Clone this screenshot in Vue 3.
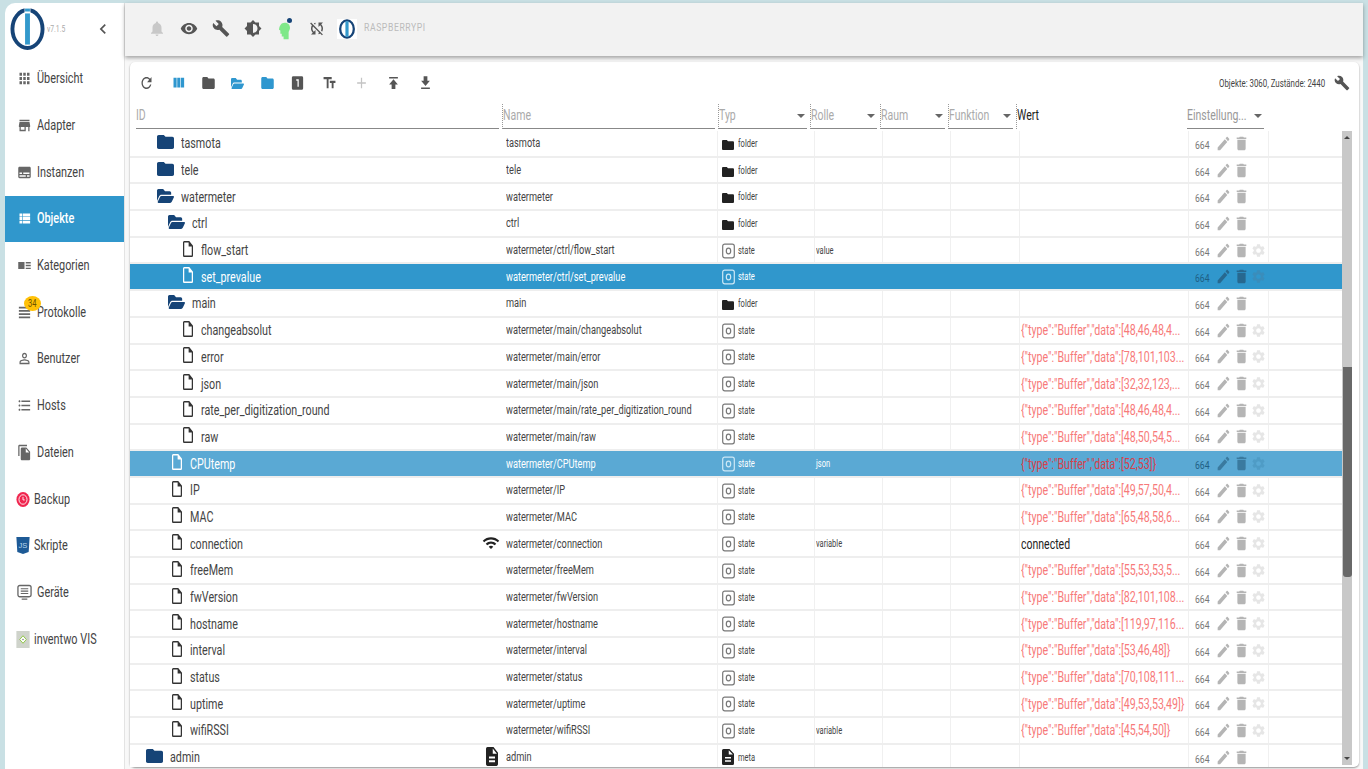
<script setup>
const icons = {
  refresh: 'M17.65 6.35C16.2 4.9 14.21 4 12 4c-4.42 0-7.99 3.58-7.99 8s3.57 8 7.99 8c3.73 0 6.84-2.55 7.73-6h-2.08c-.82 2.33-3.04 4-5.65 4-3.31 0-6-2.69-6-6s2.69-6 6-6c1.66 0 3.14.69 4.22 1.78L13 11h7V4l-2.35 2.35z',
  columns: 'M10 18h5V5h-5v13zm-6 0h5V5H4v13zM16 5v13h5V5h-5z',
  folder: 'M10 4H4c-1.1 0-1.99.9-1.99 2L2 18c0 1.1.9 2 2 2h16c1.1 0 2-.9 2-2V8c0-1.1-.9-2-2-2h-8l-2-2z',
  file: 'M14 2H6c-1.1 0-1.99.9-1.99 2L4 20c0 1.1.89 2 1.99 2H18c1.1 0 2-.9 2-2V8l-6-6zM6 20V4h7v5h5v11H6z',
  doc: 'M14 2H6c-1.1 0-1.99.9-1.99 2L4 20c0 1.1.89 2 1.99 2H18c1.1 0 2-.9 2-2V8l-6-6zm2 16H8v-2h8v2zm0-4H8v-2h8v2zm-3-5V3.5L18.5 9H13z',
  wrench: 'M22.7 19l-9.1-9.1c.9-2.3.4-5-1.5-6.9-2-2-5-2.4-7.4-1.3L9 6 6 9 1.6 4.7C.4 7.1.9 10.1 2.9 12.1c1.9 1.9 4.6 2.4 6.9 1.5l9.1 9.1c.4.4 1 .4 1.4 0l2.3-2.3c.5-.4.5-1.1.1-1.4z',
  bell: 'M12 22c1.1 0 2-.9 2-2h-4c0 1.1.89 2 2 2zm6-6v-5c0-3.07-1.64-5.64-4.5-6.32V4c0-.83-.67-1.5-1.5-1.5s-1.5.67-1.5 1.5v.68C7.63 5.36 6 7.92 6 11v5l-2 2v1h16v-1l-2-2z',
  eye: 'M12 4.5C7 4.5 2.73 7.61 1 12c1.73 4.39 6 7.5 11 7.5s9.27-3.11 11-7.5c-1.73-4.39-6-7.5-11-7.5zM12 17c-2.76 0-5-2.24-5-5s2.24-5 5-5 5 2.24 5 5-2.24 5-5 5zm0-8c-1.66 0-3 1.34-3 3s1.34 3 3 3 3-1.34 3-3-1.34-3-3-3z',
  bright: 'M20 15.31L23.31 12 20 8.69V4h-4.69L12 .69 8.69 4H4v4.69L.69 12 4 15.31V20h4.69L12 23.31 15.31 20H20v-4.69zM12 18V6c3.31 0 6 2.69 6 6s-2.69 6-6 6z',
  sync: 'M10 6.35V4.26c-.8.21-1.55.54-2.23.96l1.46 1.46c.25-.12.5-.24.77-.33zm-7.14-.94l2.36 2.36C4.45 8.99 4 10.44 4 12c0 2.21.91 4.2 2.36 5.64L4 20h6v-6l-2.24 2.24C6.68 15.15 6 13.66 6 12c0-1 .25-1.94.68-2.77l8.08 8.08c-.25.13-.5.25-.77.34v2.09c.8-.21 1.55-.54 2.23-.96l2.36 2.36 1.27-1.27L4.14 4.14 2.86 5.41zM20 4h-6v6l2.24-2.24C17.32 8.85 18 10.34 18 12c0 1-.25 1.94-.68 2.77l1.46 1.46C19.55 15.01 20 13.56 20 12c0-2.21-.91-4.2-2.36-5.64L20 4z',
  chevron: 'M15.41 7.41L14 6l-6 6 6 6 1.41-1.41L10.83 12z',
  apps: 'M4 8h4V4H4v4zm6 12h4v-4h-4v4zm-6 0h4v-4H4v4zm0-6h4v-4H4v4zm6 0h4v-4h-4v4zm6-10v4h4V4h-4zm-6 4h4V4h-4v4zm6 6h4v-4h-4v4zm0 6h4v-4h-4v4z',
  store: 'M20 4H4v2h16V4zm1 10v-2l-1-5H4l-1 5v2h1v6h10v-6h4v6h2v-6h1zm-9 4H6v-4h6v4z',
  inst: 'M20 4H4c-1.1 0-2 .9-2 2v12c0 1.1.9 2 2 2h16c1.1 0 2-.9 2-2V6c0-1.1-.9-2-2-2zM4 12h4v2H4v-2zm10 6H4v-2h10v2zm6 0h-4v-2h4v2zm0-4H10v-2h10v2z',
  list: 'M4 14h4v-4H4v4zm0 5h4v-4H4v4zM4 9h4V5H4v4zm5 5h12v-4H9v4zm0 5h12v-4H9v4zM9 5v4h12V5H9z',
  cat: 'M2 7h10v10H2V7zm3 5h4v2H5v-2zM14 7h8v2h-8V7zm0 4h8v2h-8v-2zm0 4h8v2h-8v-2z',
  log: 'M3 4h18v2.4H3V4zm0 4.6h18V11H3V8.6zm0 4.6h18v2.4H3v-2.4zm0 4.6h18v2.4H3v-2.4z',
  person: 'M12 5.9c1.16 0 2.1.94 2.1 2.1s-.94 2.1-2.1 2.1S9.9 9.16 9.9 8s.94-2.1 2.1-2.1m0 9c2.97 0 6.1 1.46 6.1 2.1v1.1H5.9V17c0-.64 3.13-2.1 6.1-2.1M12 4C9.79 4 8 5.79 8 8s1.79 4 4 4 4-1.79 4-4-1.79-4-4-4zm0 9c-2.67 0-8 1.34-8 4v3h16v-3c0-2.66-5.33-4-8-4z',
  hosts: 'M4 10.5c-.83 0-1.5.67-1.5 1.5s.67 1.5 1.5 1.5 1.5-.67 1.5-1.5-.67-1.5-1.5-1.5zm0-6c-.83 0-1.5.67-1.5 1.5S3.17 7.5 4 7.5 5.5 6.83 5.5 6 4.83 4.5 4 4.5zm0 12c-.83 0-1.5.68-1.5 1.5s.68 1.5 1.5 1.5 1.5-.68 1.5-1.5-.67-1.5-1.5-1.5zM7 19h14v-2H7v2zm0-6h14v-2H7v2zm0-8v2h14V5H7z',
  files: 'M16 1H4c-1.1 0-2 .9-2 2v14h2V3h12V1zm-1 4l6 6v10c0 1.1-.9 2-2 2H7.99C6.89 23 6 22.1 6 21l.01-14c0-1.1.89-2 1.99-2h7zm-1 7h5.5L14 6.5V12z',
  edit: 'M3 17.25V21h3.75L17.81 9.94l-3.75-3.75L3 17.25zM20.71 7.04c.39-.39.39-1.02 0-1.41l-2.34-2.34c-.39-.39-1.02-.39-1.41 0l-1.83 1.83 3.75 3.75 1.83-1.83z',
  trash: 'M6 19c0 1.1.9 2 2 2h8c1.1 0 2-.9 2-2V7H6v12zM19 4h-3.5l-1-1h-5l-1 1H5v2h14V4z',
  gear: 'M19.14 12.94c.04-.3.06-.61.06-.94 0-.32-.02-.64-.07-.94l2.03-1.58c.18-.14.23-.41.12-.61l-1.92-3.32c-.12-.22-.37-.29-.59-.22l-2.39.96c-.5-.38-1.03-.7-1.62-.94l-.36-2.54c-.04-.24-.24-.41-.48-.41h-3.84c-.24 0-.43.17-.47.41l-.36 2.54c-.59.24-1.13.57-1.62.94l-2.39-.96c-.22-.08-.47 0-.59.22L2.74 8.87c-.12.21-.08.47.12.61l2.03 1.58c-.05.3-.09.63-.09.94s.02.64.07.94l-2.03 1.58c-.18.14-.23.41-.12.61l1.92 3.32c.12.22.37.29.59.22l2.39-.96c.5.38 1.03.7 1.62.94l.36 2.54c.05.24.24.41.48.41h3.84c.24 0 .44-.17.47-.41l.36-2.54c.59-.24 1.13-.56 1.62-.94l2.39.96c.22.08.47 0 .59-.22l1.92-3.32c.12-.22.07-.47-.12-.61l-2.01-1.58zM12 15.6c-1.98 0-3.6-1.62-3.6-3.6s1.62-3.6 3.6-3.6 3.6 1.62 3.6 3.6-1.62 3.6-3.6 3.6z',
  wifi: 'M1 9l2 2c4.97-4.97 13.03-4.97 18 0l2-2C16.93 2.93 7.08 2.93 1 9zm8 8l3 3 3-3c-1.65-1.66-4.34-1.66-6 0zm-4-4l2 2c2.76-2.76 7.24-2.76 10 0l2-2C15.14 9.14 8.87 9.14 5 13z',
  one: 'M19 3H5c-1.1 0-2 .9-2 2v14c0 1.1.9 2 2 2h14c1.1 0 2-.9 2-2V5c0-1.1-.9-2-2-2zm-5 14h-2V9h-2V7h4v10z',
  text: 'M2.5 4v3h5v12h3V7h5V4h-13zm19 5h-9v3h3v7h3v-7h3V9z',
  add: 'M19 13h-6v6h-2v-6H5v-2h6V5h2v6h6v2z',
  up: 'M5 4v2h14V4H5zm0 10h4v6h6v-6h4l-7-7-7 7z',
  down: 'M19 9h-4V3H9v6H5l7 7 7-7zM5 18v2h14v-2H5z',
}
const openPath = 'M572.694 292.093L500.27 416.248A63.997 63.997 0 0 1 444.989 448H45.025c-18.523 0-30.064-20.093-20.731-36.093l72.424-124.155A64 64 0 0 1 152 256h399.964c18.523 0 30.064 20.093 20.73 36.093zM152 224h328v-48c0-26.51-21.49-48-48-48H272l-64-64H48C21.49 64 0 85.49 0 112v278.046l69.077-118.418C86.214 242.25 117.989 224 152 224z'

const topIcons = [
  { d: icons.bell, c: '#c8c8c8' },
  { d: icons.eye, c: '#555' },
  { d: icons.wrench, c: '#555' },
  { d: icons.bright, c: '#555' },
]

const menu = [
  { label: 'Übersicht', d: icons.apps },
  { label: 'Adapter', d: icons.store },
  { label: 'Instanzen', d: icons.inst },
  { label: 'Objekte', d: icons.list, active: true },
  { label: 'Kategorien', d: icons.cat },
  { label: 'Protokolle', d: icons.log, badge: '34' },
  { label: 'Benutzer', d: icons.person },
  { label: 'Hosts', d: icons.hosts },
  { label: 'Dateien', d: icons.files },
  { label: 'Backup', kind: 'backup' },
  { label: 'Skripte', kind: 'js' },
  { label: 'Geräte', kind: 'device' },
  { label: 'inventwo VIS', kind: 'vis' },
]

const tools = [
  { d: icons.refresh, c: '#555' },
  { d: icons.columns, c: '#2f97cf' },
  { d: icons.folder, c: '#555', narrow: true },
  { open: true, c: '#2f97cf', narrow: true },
  { d: icons.folder, c: '#2f97cf', narrow: true },
  { d: icons.one, c: '#555' },
  { d: icons.text, c: '#555' },
  { d: icons.add, c: '#c4c4c4' },
  { d: icons.up, c: '#555' },
  { d: icons.down, c: '#555' },
]

const headers = [
  { label: 'ID' },
  { label: 'Name' },
  { label: 'Typ', select: true },
  { label: 'Rolle', select: true },
  { label: 'Raum', select: true },
  { label: 'Funktion', select: true },
  { label: 'Wert', plain: true },
  { label: 'Einstellung...', select: true },
]

const buf = (s) => '{"type":"Buffer","data":[' + s
const rows = [
  { id: 'tasmota', name: 'tasmota', level: 1, icon: 'folder', type: 'folder' },
  { id: 'tele', name: 'tele', level: 1, icon: 'folder', type: 'folder' },
  { id: 'watermeter', name: 'watermeter', level: 1, icon: 'open', type: 'folder' },
  { id: 'ctrl', name: 'ctrl', level: 2, icon: 'open', type: 'folder' },
  { id: 'flow_start', name: 'watermeter/ctrl/flow_start', level: 3, icon: 'file', type: 'state', role: 'value' },
  { id: 'set_prevalue', name: 'watermeter/ctrl/set_prevalue', level: 3, icon: 'file', type: 'state', sel: 'sel' },
  { id: 'main', name: 'main', level: 2, icon: 'open', type: 'folder' },
  { id: 'changeabsolut', name: 'watermeter/main/changeabsolut', level: 3, icon: 'file', type: 'state', val: buf('48,46,48,4...') },
  { id: 'error', name: 'watermeter/main/error', level: 3, icon: 'file', type: 'state', val: buf('78,101,103...') },
  { id: 'json', name: 'watermeter/main/json', level: 3, icon: 'file', type: 'state', val: buf('32,32,123,...') },
  { id: 'rate_per_digitization_round', name: 'watermeter/main/rate_per_digitization_round', level: 3, icon: 'file', type: 'state', val: buf('48,46,48,4...') },
  { id: 'raw', name: 'watermeter/main/raw', level: 3, icon: 'file', type: 'state', val: buf('48,50,54,5...') },
  { id: 'CPUtemp', name: 'watermeter/CPUtemp', level: 2, icon: 'file', type: 'state', role: 'json', val: buf('52,53]}'), sel: 'hover' },
  { id: 'IP', name: 'watermeter/IP', level: 2, icon: 'file', type: 'state', val: buf('49,57,50,4...') },
  { id: 'MAC', name: 'watermeter/MAC', level: 2, icon: 'file', type: 'state', val: buf('65,48,58,6...') },
  { id: 'connection', name: 'watermeter/connection', level: 2, icon: 'file', type: 'state', role: 'variable', val: 'connected', plain: true, side: 'wifi' },
  { id: 'freeMem', name: 'watermeter/freeMem', level: 2, icon: 'file', type: 'state', val: buf('55,53,53,5...') },
  { id: 'fwVersion', name: 'watermeter/fwVersion', level: 2, icon: 'file', type: 'state', val: buf('82,101,108...') },
  { id: 'hostname', name: 'watermeter/hostname', level: 2, icon: 'file', type: 'state', val: buf('119,97,116...') },
  { id: 'interval', name: 'watermeter/interval', level: 2, icon: 'file', type: 'state', val: buf('53,46,48]}') },
  { id: 'status', name: 'watermeter/status', level: 2, icon: 'file', type: 'state', val: buf('70,108,111...') },
  { id: 'uptime', name: 'watermeter/uptime', level: 2, icon: 'file', type: 'state', val: buf('49,53,53,49]}') },
  { id: 'wifiRSSI', name: 'watermeter/wifiRSSI', level: 2, icon: 'file', type: 'state', role: 'variable', val: buf('45,54,50]}') },
  { id: 'admin', name: 'admin', level: 0, icon: 'folder', type: 'meta', side: 'doc' },
]
</script>

<template>
  <div class="page">
    <aside class="sidebar">
      <div class="brand">
        <svg class="logo" viewBox="0 0 36 44">
          <ellipse cx="18" cy="22" rx="15.5" ry="19.5" fill="none" stroke="#164477" stroke-width="4" />
          <rect x="15" y="0" width="6" height="6" fill="#fff" />
          <rect x="15.5" y="1" width="5" height="3" fill="#3399cc" />
          <rect x="15.5" y="6" width="5" height="32" fill="#3399cc" />
        </svg>
        <span class="version"><span class="sq">v7.1.5</span></span>
        <svg class="collapse" viewBox="0 0 24 24"><path :d="icons.chevron" /></svg>
      </div>
      <nav class="menu">
        <div v-for="item in menu" :key="item.label" class="menu-item" :class="[{ active: item.active }, item.kind]">
          <svg v-if="item.d" class="menu-icon" viewBox="0 0 24 24" preserveAspectRatio="none"><path :d="item.d" /></svg>
          <svg v-else-if="item.kind === 'backup'" class="menu-icon custom" viewBox="0 0 16 18">
            <ellipse cx="8" cy="9" rx="7.5" ry="8.5" fill="#f0264f" />
            <ellipse cx="8" cy="9" rx="4.6" ry="5.4" fill="none" stroke="#fff" stroke-width="1" />
            <path d="M8 6v3.5h2" fill="none" stroke="#fff" stroke-width="1" />
          </svg>
          <svg v-else-if="item.kind === 'js'" class="menu-icon custom" viewBox="0 0 14 18">
            <path d="M0 0h14l-1 16-6 2-6-2z" fill="#1d5a96" />
            <text x="7" y="12" text-anchor="middle" class="js-text">JS</text>
          </svg>
          <svg v-else-if="item.kind === 'device'" class="menu-icon custom" viewBox="0 0 16 17">
            <rect x="1" y="1" width="14" height="12" rx="2" fill="none" stroke="#666" stroke-width="1.4" />
            <path d="M4 4.5h8M4 7h8M4 9.5h8M5 15.5h6" stroke="#666" stroke-width="1.2" />
          </svg>
          <svg v-else class="menu-icon custom" viewBox="0 0 14 18">
            <rect width="14" height="18" fill="#cfd3cb" />
            <path d="M7 5l3.5 4L7 13 3.500 9z" fill="#fff" stroke="#8cc63f" stroke-width="1" />
            <circle cx="7" cy="9" r=".8" fill="#777" />
          </svg>
          <span class="menu-label"><span class="sq">{{ item.label }}</span></span>
          <span v-if="item.badge" class="badge"><span class="sq">{{ item.badge }}</span></span>
        </div>
      </nav>
    </aside>

    <main class="main">
      <header class="topbar">
        <svg v-for="(t, i) in topIcons" :key="i" class="top-icon" viewBox="0 0 24 24" :style="{ fill: t.c }"><path :d="t.d" /></svg>
        <div class="head-wrap">
          <svg class="head" viewBox="0 0 12 20">
            <path d="M6 1c3.500 0 6 2 6 5.500 0 2-1 3.300-1.500 4.500v8H5v-3H3v-3H1.500V9.500L0 8.500C.500 4 2.500 1 6 1z" fill="#7fe889" />
          </svg>
          <span class="head-dot"></span>
        </div>
        <svg class="top-icon sync" viewBox="0 0 24 24" fill="#555"><path :d="icons.sync" /></svg>
        <div class="host-logo">
          <svg viewBox="0 0 36 44" width="18" height="20">
            <ellipse cx="18" cy="22" rx="15" ry="19" fill="none" stroke="#164477" stroke-width="5" />
            <rect x="14.500" y="5" width="7" height="34" fill="#3399cc" />
          </svg>
        </div>
        <span class="host"><span class="sq">RASPBERRYPI</span></span>
      </header>

      <section class="card">
        <div class="toolbar">
          <span v-for="(t, i) in tools" :key="i" class="tool" :class="{ narrow: t.narrow }">
            <svg v-if="t.open" viewBox="0 64 576 384" width="13" height="11" preserveAspectRatio="none" :style="{ fill: t.c }"><path :d="openPath" /></svg>
            <svg v-else viewBox="0 0 24 24" width="15" height="18" preserveAspectRatio="none" :style="{ fill: t.c }"><path :d="t.d" /></svg>
          </span>
          <span class="counts"><span class="sq">Objekte: 3060, Zustände: 2440</span></span>
          <svg class="tool-wrench" viewBox="0 0 24 24"><path :d="icons.wrench" /></svg>
        </div>

        <div class="head-row">
          <div v-for="h in headers" :key="h.label" class="head-cell" :class="{ plain: h.plain }">
            <span class="sq">{{ h.label }}</span>
            <span v-if="h.select" class="caret"></span>
          </div>
        </div>

        <div class="table">
          <div class="rows">
            <div v-for="r in rows" :key="r.id" class="row" :class="r.sel">
              <div class="cell tree" :style="{ paddingLeft: 16 + r.level * 11 + 'px' }">
                <svg v-if="r.icon === 'folder'" class="tree-folder" viewBox="2 4 20 16" preserveAspectRatio="none"><path :d="icons.folder" /></svg>
                <svg v-else-if="r.icon === 'open'" class="tree-folder" viewBox="0 64 576 384" preserveAspectRatio="none"><path :d="openPath" /></svg>
                <svg v-else class="tree-file" viewBox="4 2 16 20" preserveAspectRatio="none"><path :d="icons.file" /></svg>
                <span class="sq">{{ r.id }}</span>
                <svg v-if="r.side === 'wifi'" class="side-wifi" viewBox="0 0 24 24"><path :d="icons.wifi" /></svg>
                <svg v-if="r.side === 'doc'" class="side-doc" viewBox="4 2 16 20" preserveAspectRatio="none"><path :d="icons.doc" /></svg>
              </div>
              <div class="cell name"><span class="sq">{{ r.name }}</span></div>
              <div class="cell type">
                <svg v-if="r.type === 'folder'" class="type-icon" viewBox="2 4 20 16" preserveAspectRatio="none"><path :d="icons.folder" /></svg>
                <svg v-else-if="r.type === 'meta'" class="type-icon meta" viewBox="4 2 16 20" preserveAspectRatio="none"><path :d="icons.doc" /></svg>
                <svg v-else class="state-icon" viewBox="0 0 13 15">
                  <rect x=".7" y=".7" width="11.600" height="13.600" rx="2" fill="none" />
                  <ellipse cx="6.500" cy="7.500" rx="2.200" ry="2.800" fill="none" />
                </svg>
                <span class="sq">{{ r.type }}</span>
              </div>
              <div class="cell role"><span class="sq">{{ r.role }}</span></div>
              <div class="cell"></div>
              <div class="cell"></div>
              <div class="cell value" :class="{ plain: r.plain }"><span class="sq">{{ r.val }}</span></div>
              <div class="cell acts">
                <span class="perm"><span class="sq">664</span></span>
                <svg class="act" viewBox="2 2 20 20" preserveAspectRatio="none"><path :d="icons.edit" /></svg>
                <svg class="act trash" viewBox="4 2 16 20" preserveAspectRatio="none"><path :d="icons.trash" /></svg>
                <svg v-if="r.type === 'state'" class="act gear" viewBox="2 2 20 20"><path :d="icons.gear" /></svg>
              </div>
              <div class="cell last"></div>
            </div>
          </div>
          <div class="scrollbar">
            <span class="arrow up"></span>
            <span class="arrow dn"></span>
            <span class="thumb"></span>
          </div>
        </div>
      </section>
    </main>
  </div>
</template>

<style>
html, body { margin: 0; background: #c9e0e4; }
</style>

<style scoped>
.page {
  display: flex;
  width: 1368px;
  height: 769px;
  padding: 3px 5px 0 5px;
  box-sizing: border-box;
  overflow: hidden;
  background: #c9e0e4;
  font-family: Roboto, "Liberation Sans", sans-serif;
  color: #444;
}
.sq {
  display: inline-block;
  white-space: nowrap;
  transform: scaleX(0.75);
  transform-origin: left center;
}

.sidebar {
  width: 120px;
  flex: none;
  background: #fff;
  border-radius: 10px 0 0 0;
  border-right: 1px solid #e3e3e3;
  box-sizing: border-box;
}
.brand {
  height: 52.500px;
  display: flex;
  align-items: center;
  padding-left: 5px;
  position: relative;
}
.logo { width: 35px; height: 44px; flex: none; }
.version { font-size: 9px; color: #aaa; margin-left: 2px; width: 40px; }
.collapse { width: 20px; height: 20px; fill: #555; margin-left: 6px; }
.menu-item {
  height: 46.700px;
  display: flex;
  align-items: center;
  padding-left: 12px;
  position: relative;
  font-size: 14.500px;
  color: #444;
  box-sizing: border-box;
}
.menu-item.active { background: #3097cc; color: #fff; font-weight: 500; }
.menu-icon { width: 15px; height: 17px; fill: #666; flex: none; }
.menu-item.active .menu-icon { fill: #fff; }
.menu-icon.custom { width: 14px; height: 17px; margin-left: -1px; }
.menu-item .menu-label { margin-left: 5px; }
.menu-item.backup .menu-label,
.menu-item.js .menu-label,
.menu-item.vis .menu-label { margin-left: 4px; }
.menu-item.device .menu-icon { margin-left: 0; width: 15px; }
.js-text { font-size: 8px; fill: #b9d6ee; font-family: "Liberation Sans", sans-serif; }
.badge {
  position: absolute;
  left: 19px;
  top: 7px;
  width: 17px;
  height: 15px;
  border-radius: 50%;
  background: #ffc107;
  color: #6b5200;
  font-size: 10px;
  line-height: 15px;
  padding-left: 4px;
  box-sizing: border-box;
}

.main { flex: 1; min-width: 0; display: flex; flex-direction: column; background: #f8f8f8; }
.topbar {
  height: 53px;
  flex: none;
  background: #f2f2f2;
  box-shadow: 0 2px 4px rgba(0, 0, 0, 0.35);
  display: flex;
  align-items: center;
  padding-left: 23px;
  padding-bottom: 2px;
  box-sizing: border-box;
  position: relative;
  z-index: 1;
}
.top-icon { width: 18px; height: 19px; flex: none; margin-right: 14px; }
.top-icon.sync { margin-right: 11px; }
.head-wrap { width: 18px; height: 22px; margin-right: 14px; position: relative; }
.head { width: 11px; height: 20px; position: absolute; left: 3px; top: 3px; }
.head-dot {
  position: absolute;
  left: 11px;
  top: 0;
  width: 5px;
  height: 5px;
  border-radius: 50%;
  background: #164477;
}
.host-logo {
  width: 20px;
  height: 20px;
  background: #fff;
  display: flex;
  align-items: center;
  justify-content: center;
  flex: none;
}
.host { font-size: 11.500px; color: #bbb; margin-left: 7px; letter-spacing: 0.8px; margin-bottom: 3px; }

.card {
  flex: 1;
  min-height: 0;
  margin: 6px 4px 2px 5px;
  background: #fff;
  border-radius: 5px;
  box-shadow: 0 1px 2px rgba(0, 0, 0, 0.4);
  display: flex;
  flex-direction: column;
}
.toolbar {
  height: 42px;
  flex: none;
  display: flex;
  align-items: center;
  padding: 0 9px 0 0;
  position: relative;
}
.tool {
  width: 32px;
  height: 32px;
  display: flex;
  align-items: center;
  justify-content: center;
  flex: none;
}
.tool.narrow { width: 29.300px; }
.counts {
  margin-left: auto;
  width: 110px;
  font-size: 10.500px;
  color: #444;
}
.tool-wrench { width: 16px; height: 18px; fill: #555; margin-left: 5px; }

.head-row {
  display: grid;
  grid-template-columns: 371px 216px 92px 70px 68px 68px 171px 80px;
  height: 25px;
  flex: none;
  padding-right: 150px;
}
.head-cell {
  position: relative;
  margin-left: 1px;
  margin-right: 2px;
  padding-left: 0;
  font-size: 14px;
  line-height: 22px;
  color: #aaa;
  border-bottom: 1px solid #888;
  border-left: 1px dotted #999;
}
.head-cell:first-child { border-left: 0; margin-left: 6px; }
.head-cell:last-child { border-left: 0; margin-right: 2px; color: #999; }
.head-cell.plain { border-bottom: 0; color: #222; margin-right: 0; }
.caret {
  position: absolute;
  right: 2px;
  top: 10px;
  border: 4px solid transparent;
  border-top-color: #666;
  border-bottom: 0;
}

.table { flex: 1; min-height: 0; display: flex; overflow: hidden; margin-top: 2px; }
.rows { width: 1212px; flex: none; }
.row {
  display: grid;
  grid-template-columns: 371px 217px 97px 68px 68px 69px 169px 80px 73px;
  height: 26.700px;
  box-sizing: border-box;
  border-bottom: 2px solid #eee;
  background: #fff;
}
.row.sel { background: #3097cc; color: #fff; }
.row.hover { background: #5aa9d4; color: #fff; }
.cell {
  display: flex;
  align-items: center;
  min-width: 0;
  white-space: nowrap;
  border-right: 1px solid #f0f0f0;
  box-sizing: border-box;
  overflow: hidden;
}
.row.sel .cell, .row.hover .cell { border-right-color: transparent; }
.tree { font-size: 14.300px; border-right: 0; position: relative; }
.tree-folder { width: 17px; height: 14px; fill: #164477; margin-right: 7px; flex: none; margin-top: -2px; }
.tree-file {
  width: 10px;
  height: 16px;
  fill: #333;
  margin-left: 4px;
  margin-right: 8px;
  flex: none;
  margin-top: -3px;
}
.row.sel .tree-file, .row.hover .tree-file { fill: #fff; }
.side-wifi { position: absolute; right: 1px; top: 3px; width: 18px; height: 18px; fill: #222; }
.side-doc { position: absolute; right: 3px; top: 2px; width: 12px; height: 19px; fill: #222; }
.name { font-size: 12.300px; padding-left: 5px; }
.type { font-size: 10px; padding-left: 4px; }
.type-icon { width: 12px; height: 10px; fill: #222; margin-right: 4px; margin-top: 3px; flex: none; }
.type-icon.meta { height: 16px; width: 12px; margin-top: 0; }
.state-icon { width: 13px; height: 16px; margin-right: 3px; flex: none; stroke: #777; stroke-width: 1.200; margin-top: 1px; }
.row.sel .state-icon, .row.hover .state-icon { stroke: #cde8f6; }
.role { font-size: 10px; padding-left: 1px; }
.value { font-size: 14.200px; color: #f77a7a; padding-left: 1px; }
.value.plain { color: #222; font-size: 14px; }
.row.hover .value { color: #d9404a; }
.acts { padding-left: 6px; padding-top: 3px; }
.perm { width: 22px; font-size: 11.500px; color: #777; flex: none; }
.act { width: 13px; height: 15px; fill: #b5b5b5; flex: none; margin-right: 6px; margin-top: -3px; }
.act.trash { width: 11px; margin-right: 5px; }
.act.gear { fill: #e6e6e6; width: 13px; margin-right: 0; }
.row.sel .perm, .row.hover .perm { color: #1f5f85; }
.row.sel .act { fill: #27688f; }
.row.hover .act { fill: #3a7a9f; }
.row.sel .act.gear { fill: #3a8dbb; }
.row.hover .act.gear { fill: #4f9cc6; }
.last { border-right: 0; }

.scrollbar {
  width: 10px;
  flex: none;
  background: #c8c8c8;
  position: relative;
  margin-bottom: 2px;
}
.arrow { position: absolute; left: 2px; border: 3px solid transparent; }
.arrow.up { top: 5px; border-bottom-color: #444; border-top: 0; }
.arrow.dn { bottom: 5px; border-top-color: #444; border-bottom: 0; }
.thumb {
  position: absolute;
  left: 1px;
  right: 0;
  top: 236px;
  height: 210px;
  background: #686868;
  border-radius: 0 0 3px 3px;
}
</style>
